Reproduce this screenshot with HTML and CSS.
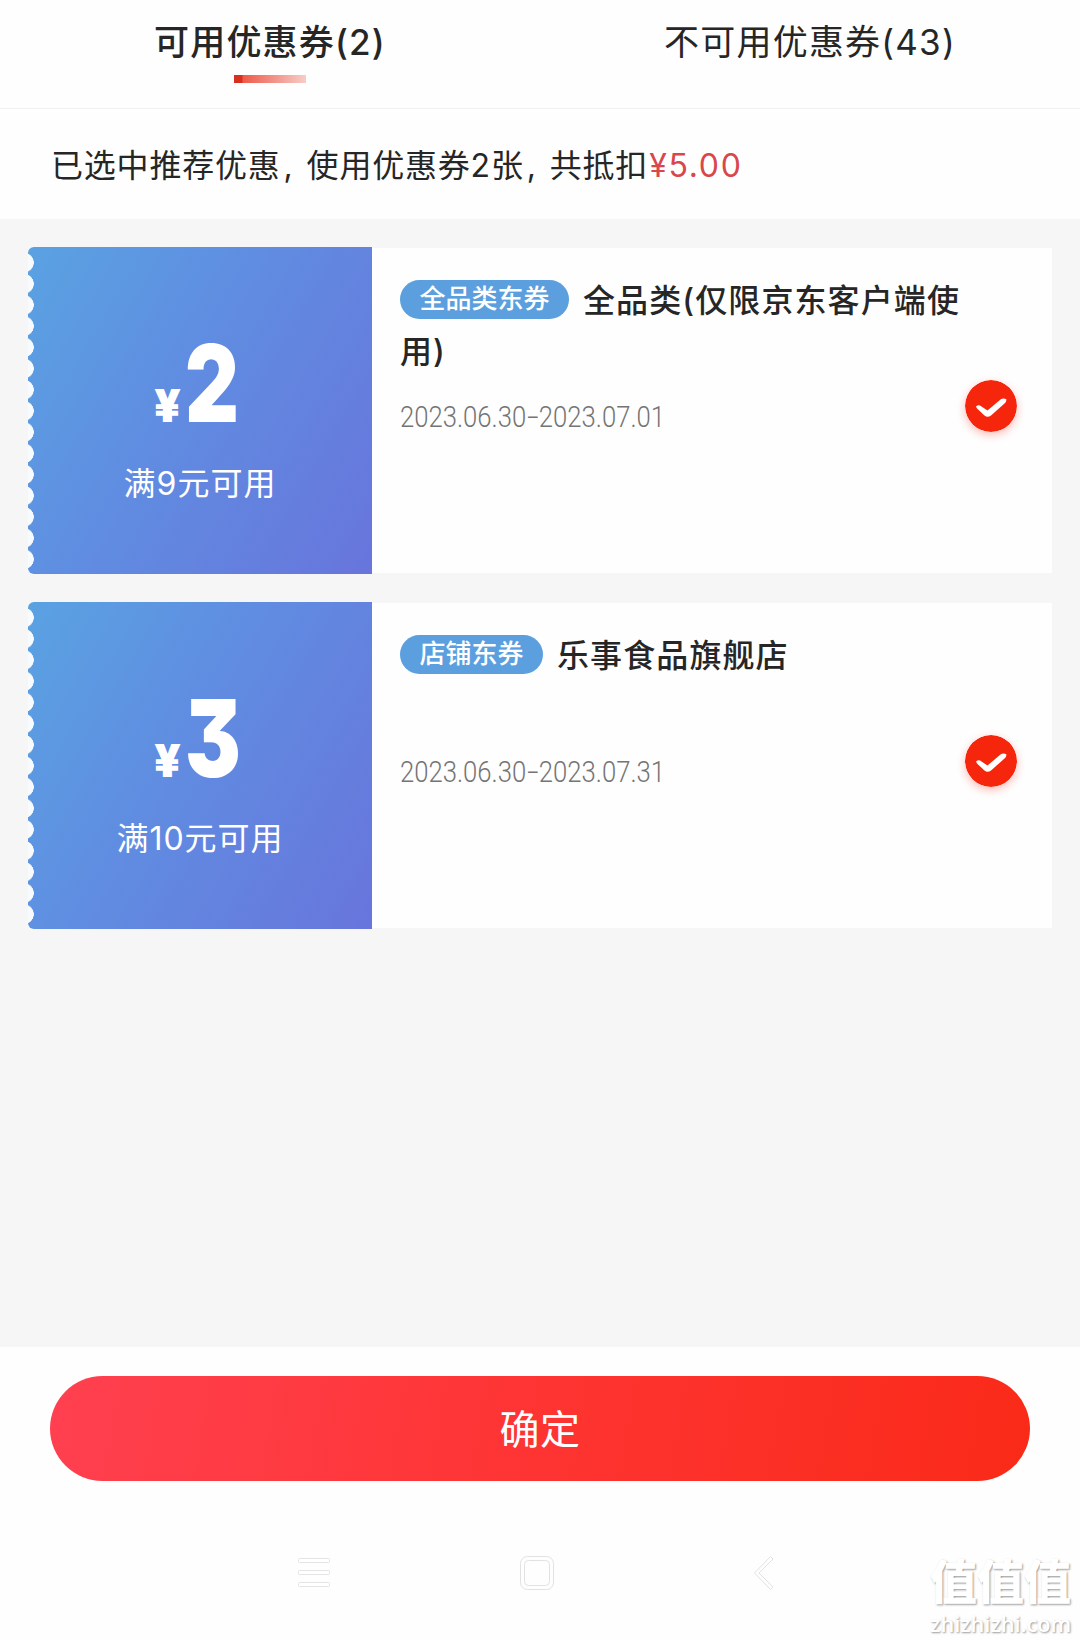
FILE: index.html
```html
<!DOCTYPE html>
<html lang="zh-CN">
<head>
  <meta charset="UTF-8" />
  <title>优惠券</title>
  <link rel="stylesheet" href="styles.css">
</head>
<body>
  <!-- 顶部标签 -->
  <div class="tabs">
    <div class="tab active">可用优惠券(2)</div>
    <div class="tab">不可用优惠券(43)</div>
  </div>

  <div class="summary">已选中推荐优惠<span class="comma">,</span>使用优惠券2张<span class="comma">,</span>共抵扣<span class="price">¥5.00</span></div>

  <!-- 优惠券列表 -->
  <div class="coupon-list">
    <div class="coupon">
      <div class="coupon-left">
        <div class="amount"><span class="yen">¥</span><span class="num">2</span></div>
        <div class="limit">满9元可用</div>
      </div>
      <div class="coupon-right">
        <div class="title"><span class="tag">全品类东券</span>全品类(仅限京东客户端使用)</div>
        <div class="date">2023.06.30<span class="dash">-</span>2023.07.01</div>
        <svg class="check" viewBox="0 0 52 52">
          <circle cx="26" cy="26" r="26" fill="#f5260c" />
          <path d="M11 26.5 Q13.5 24 16.5 26.5 L22.5 30.5 L35.5 19.5 Q38.5 17.5 41.5 19.5 Q41.5 21.5 39.5 23.5 L26 35.5 Q22.5 38 19.5 35.5 L12 28.5 Z" fill="#fff" />
        </svg>
      </div>
    </div>

    <div class="coupon">
      <div class="coupon-left">
        <div class="amount"><span class="yen">¥</span><span class="num">3</span></div>
        <div class="limit">满10元可用</div>
      </div>
      <div class="coupon-right">
        <div class="title"><span class="tag">店铺东券</span>乐事食品旗舰店</div>
        <div class="date">2023.06.30<span class="dash">-</span>2023.07.31</div>
        <svg class="check" viewBox="0 0 52 52">
          <circle cx="26" cy="26" r="26" fill="#f5260c" />
          <path d="M11 26.5 Q13.5 24 16.5 26.5 L22.5 30.5 L35.5 19.5 Q38.5 17.5 41.5 19.5 Q41.5 21.5 39.5 23.5 L26 35.5 Q22.5 38 19.5 35.5 L12 28.5 Z" fill="#fff" />
        </svg>
      </div>
    </div>
  </div>

  <!-- 底部按钮 -->
  <div class="footer">
    <button class="confirm">确定</button>
    <div class="nav">
      <svg class="nav-menu" viewBox="0 0 34 36" fill="#fff" stroke="#e4e4e4">
        <rect x="1.5" y="3.5" width="31" height="4" rx="1" />
        <rect x="1.5" y="15.5" width="31" height="4" rx="1" />
        <rect x="1.5" y="27.5" width="31" height="4" rx="1" />
      </svg>
      <svg class="nav-home" viewBox="0 0 36 36" fill="none" stroke="#e2e2e2">
        <rect x="1.5" y="1.5" width="33" height="33" rx="7" />
        <rect x="5.5" y="5.5" width="25" height="25" rx="4" />
      </svg>
      <svg class="nav-back" viewBox="0 0 22 36" fill="none" stroke="#e2e2e2" stroke-linejoin="round">
        <path d="M17.5 1.5 L1.5 18 L17.5 34.5 L20 32 L6 18 L20 4 Z" />
      </svg>
    </div>
  </div>

  <!-- 水印 -->
  <div class="watermark">
    <div class="wm-name">值值值</div>
    <div class="wm-url">zhizhizhi.com</div>
  </div>
</body>
</html>
```
FILE: styles.css
```css
* {
  box-sizing: border-box;
}
body {
  margin: 0;
  height: 1641px;
  display: flex;
  flex-direction: column;
  position: relative;
  overflow: hidden;
  font-family: Inter, "Noto Sans CJK SC", sans-serif;
  background: #fefefe;
  color: #262626;
}

/* --- 标签 --- */
.tabs {
  display: flex;
  height: 109px;
  border-bottom: 1px solid #f0f0f0;
}
.tab {
  flex: 1;
  padding-top: 16px;
  line-height: 52px;
  font-size: 35px;
  letter-spacing: 1.2px;
  text-align: center;
}
.tab.active {
  font-weight: 500;
}
.tab.active::after {
  content: "";
  display: block;
  width: 72px;
  height: 8px;
  margin: 7px auto 0;
  background: linear-gradient(90deg, #d8301f 0, #d8301f 8px, #ee5a4a 9px, #f7cdc8 100%);
}

/* --- 已选优惠 --- */
.summary {
  height: 110px;
  padding-left: 51px;
  line-height: 113px;
  font-size: 32px;
  letter-spacing: 0.8px;
  white-space: nowrap;
}
.comma {
  display: inline-block;
  width: 26px;
  padding-left: 3px;
}
.price {
  margin-left: 1px;
  color: #d9474b;
  letter-spacing: 1.7px;
}

/* --- 优惠券 --- */
.coupon-list {
  flex: 1;
  display: flex;
  flex-direction: column;
  gap: 28px;
  padding: 28px;
  background: #f6f6f6;
}
.coupon {
  display: flex;
  height: 327px;
}
.coupon-left {
  position: relative;
  width: 344px;
  padding-top: 75px;
  border-radius: 6px 0 0 6px;
  background: linear-gradient(120deg, #5aa2e2 0%, #608ce1 45%, #6875dc 100%);
  color: #fff;
  text-align: center;
}
/* 左侧锯齿 */
.coupon-left::before {
  content: "";
  position: absolute;
  left: 0;
  top: 5px;
  width: 7px;
  height: 318px;
  background: radial-gradient(circle at -4px 50%, #f8fbfe 9.5px, transparent 10px) 0 0 / 7px 21.2px repeat-y;
}
.amount {
  display: flex;
  justify-content: center;
  align-items: baseline;
  height: 122px;
  line-height: 122px;
  font-weight: 900;
}
.yen {
  width: 31px;
  font-size: 46px;
  text-align: left;
}
.num {
  width: 61px;
  font-size: 107px;
  font-feature-settings: "cv09";
  transform: scaleX(0.78);
  transform-origin: 0 50%;
}
.limit {
  margin-top: 15px;
  line-height: 49px;
  font-size: 32px;
  letter-spacing: 1px;
}
.coupon-right {
  flex: 1;
  position: relative;
  margin: 1px 0;
  padding: 27px 80px 0 28px;
  background: #fefefe;
}
.title {
  height: 103px;
  line-height: 51px;
  font-size: 32px;
  font-weight: 500;
  letter-spacing: 1.1px;
}
.tag {
  display: inline-block;
  height: 39px;
  margin-right: 14px;
  padding: 0 19.5px;
  border-radius: 20px;
  background: #5b9fde;
  color: #fff;
  line-height: 38px;
  font-size: 26px;
  letter-spacing: 0;
  vertical-align: 4px;
}
.date {
  margin-top: 20px;
  line-height: 38px;
  font-family: Roboto, sans-serif;
  font-size: 29px;
  font-weight: 300;
  white-space: nowrap;
  color: #747474;
  transform: scaleX(0.885);
  transform-origin: 0 50%;
}
.dash {
  display: inline-block;
  transform: scaleX(1.6);
  margin: 0 3px;
}
.check {
  position: absolute;
  right: 35.5px;
  top: 132px;
  width: 52px;
  height: 52px;
  border-radius: 50%;
  box-shadow: 0 3px 8px rgba(245, 38, 12, 0.3);
}

/* --- 底部 --- */
.footer {
  height: 294px;
  padding: 29px 50px 0;
}
.confirm {
  display: block;
  width: 980px;
  height: 105px;
  padding: 0 0 4px;
  border: 0;
  border-radius: 53px;
  background: linear-gradient(100deg, #ff4050 0%, #fe3535 45%, #fa2a18 100%);
  color: #fff;
  font-family: inherit;
  font-size: 40px;
  letter-spacing: 0.5px;
}
.nav {
  display: flex;
  margin: 74px 0 0 247px;
}
.nav-menu {
  width: 34px;
  height: 36px;
}
.nav-home {
  width: 36px;
  height: 36px;
  margin: 0 198px 0 188px;
}
.nav-back {
  width: 22px;
  height: 36px;
}

/* --- 水印 --- */
.watermark {
  position: absolute;
  right: 8px;
  bottom: 2px;
  width: 142px;
  color: #fff;
  white-space: nowrap;
  text-shadow: 1px 1px 2px #999;
}
.wm-name {
  line-height: 54px;
  font-size: 47px;
  font-weight: 900;
}
.wm-url {
  line-height: 30px;
  font-family: "Open Sans", sans-serif;
  font-size: 21.7px;
  font-weight: 600;
}
```
